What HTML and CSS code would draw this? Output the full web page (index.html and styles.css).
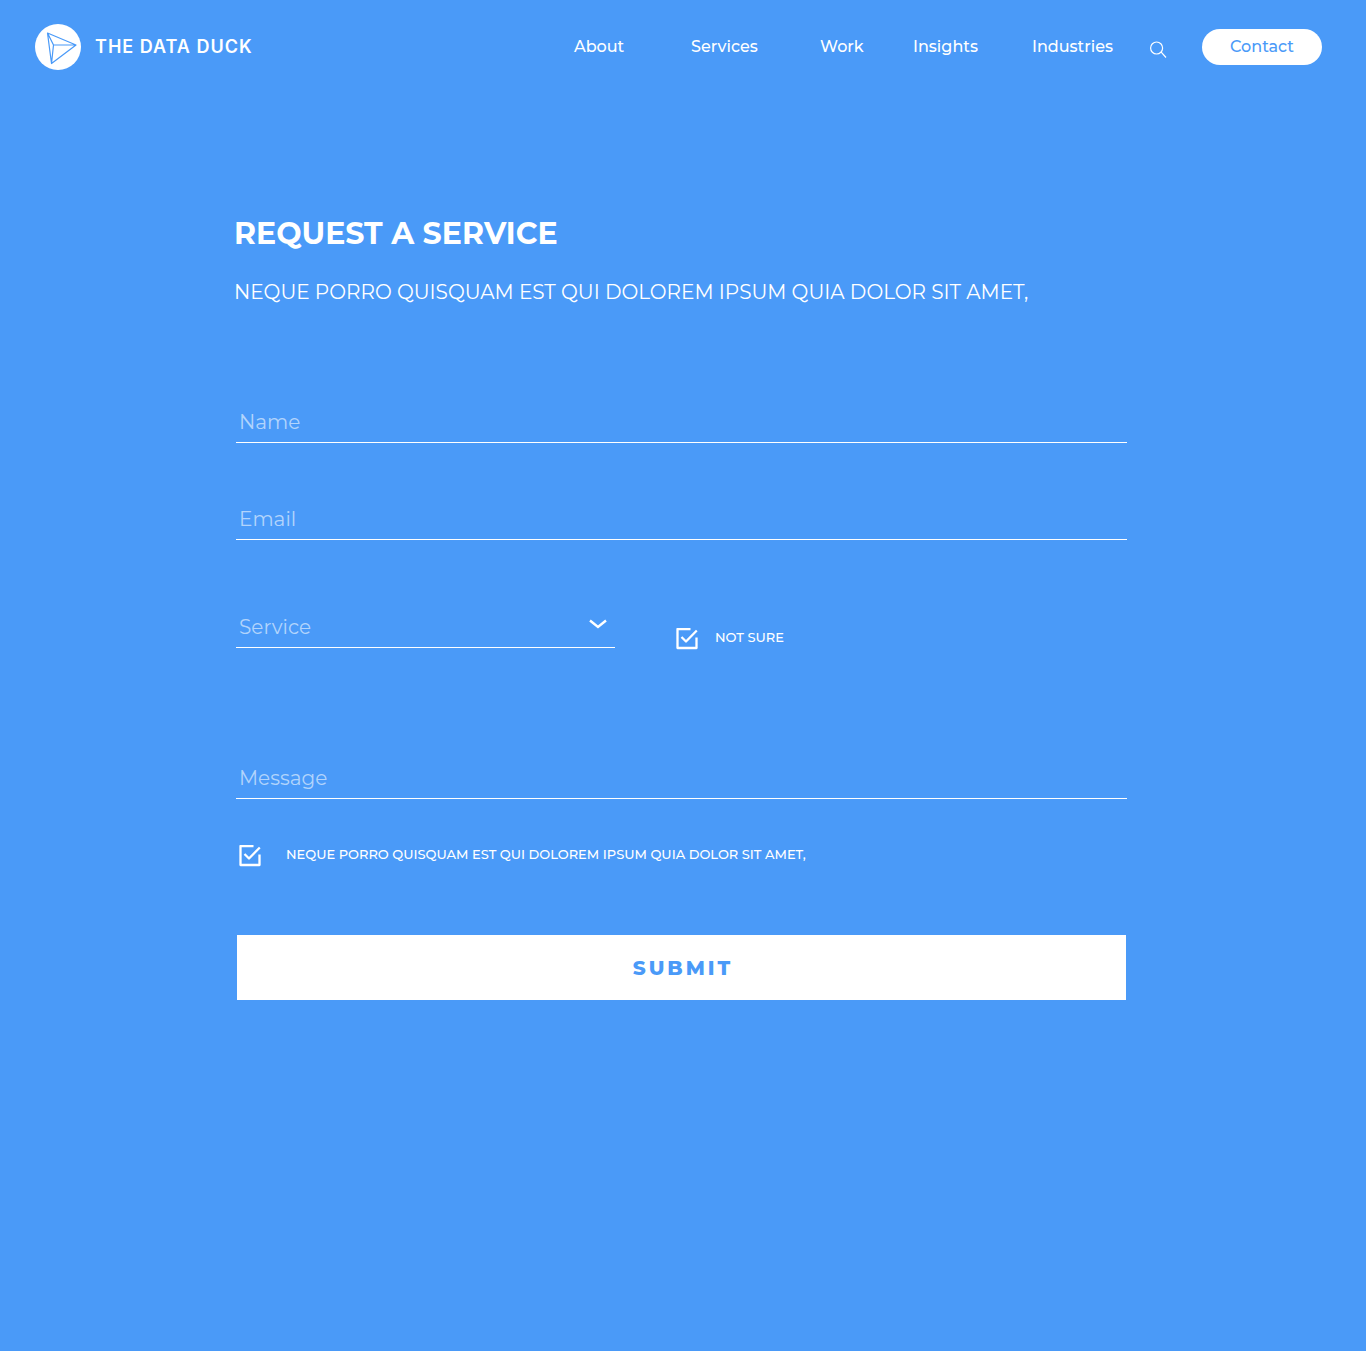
FILE: index.html
```html
<!DOCTYPE html>
<html lang="en">
<head>
<meta charset="utf-8">
<meta name="viewport" content="width=device-width, initial-scale=1">
<title>Request a service – The Data Duck</title>
<link rel="stylesheet" href="styles.css">
</head>
<body>
<header class="header">
  <a class="brand" href="#">
    <svg class="brand-mark" viewBox="0 0 46 46" aria-hidden="true">
      <circle cx="23" cy="23" r="23" fill="#fff"/>
      <path d="M12.500 9 41 21 16.500 39.500ZM12.500 9 18.500 21 41 21M18.500 21 16.500 39.500" fill="none" stroke="#4a9af8" stroke-width="1.200" stroke-linejoin="round"/>
    </svg>
    <span class="brand-name">THE DATA DUCK</span>
  </a>
  <nav class="nav">
    <a class="nav-link" href="#">About</a>
    <a class="nav-link" href="#">Services</a>
    <a class="nav-link" href="#">Work</a>
    <a class="nav-link" href="#">Insights</a>
    <a class="nav-link" href="#">Industries</a>
    <button class="search" type="button" aria-label="Search">
      <svg width="18" height="18" viewBox="0 0 18 18" aria-hidden="true"><path d="M11.200 11.200 16 16.500M12.600 7A6 6 0 1 1 .6 7a6 6 0 0 1 12 0Z" fill="none" stroke="#fff" stroke-width="1.200"/></svg>
    </button>
    <a class="contact" href="#">Contact</a>
  </nav>
</header>
<main class="main">
  <h1 class="title">REQUEST A SERVICE</h1>
  <p class="intro">NEQUE PORRO QUISQUAM EST QUI DOLOREM IPSUM QUIA DOLOR SIT AMET,</p>
  <form class="form">
    <input class="field" type="text" placeholder="Name" aria-label="Name">
    <input class="field email" type="email" placeholder="Email" aria-label="Email">
    <div class="service-row">
      <div class="select-wrap">
        <select class="field select" aria-label="Service"><option>Service</option></select>
        <svg class="chevron" width="18" height="10" viewBox="0 0 18 10" aria-hidden="true"><path d="M1 1.500 9 8 17 1.500" fill="none" stroke="#fff" stroke-width="2.400"/></svg>
      </div>
      <label class="check">
        <span class="tick">
          <input class="tick-input" type="checkbox" checked>
          <svg class="tick-icon" viewBox="0 0 22 22" aria-hidden="true"><path d="M14.500 1.100H1.500V20H20.500V9.500M5.500 9 10 13.500 20.800 2.500" fill="none" stroke="#fff" stroke-width="2.300" stroke-linejoin="round"/></svg>
        </span>
        <span class="check-text">NOT SURE</span>
      </label>
    </div>
    <input class="field message" type="text" placeholder="Message" aria-label="Message">
    <label class="check consent">
      <span class="tick">
        <input class="tick-input" type="checkbox" checked>
        <svg class="tick-icon" viewBox="0 0 22 22" aria-hidden="true"><path d="M14.500 1.100H1.500V20H20.500V9.500M5.500 9 10 13.500 20.800 2.500" fill="none" stroke="#fff" stroke-width="2.300" stroke-linejoin="round"/></svg>
      </span>
      <span class="check-text">NEQUE PORRO QUISQUAM EST QUI DOLOREM IPSUM QUIA DOLOR SIT AMET,</span>
    </label>
    <button class="submit" type="submit">SUBMIT</button>
  </form>
</main>
</body>
</html>
```
FILE: styles.css
```css
* { box-sizing: border-box; }

body {
  margin: 0;
  min-height: 100vh;
  background: #4a9af8;
  color: #fff;
  font-family: Montserrat, Inter, sans-serif;
}

a { color: inherit; text-decoration: none; }
input, select, button { font: inherit; color: inherit; }

.header {
  display: flex;
  justify-content: space-between;
  align-items: center;
  padding: 24px 44px 24px 35px;
}
.brand { display: flex; align-items: center; gap: 14px; }
.brand-mark { width: 46px; height: 46px; }
.brand-name {
  font-family: Inter, sans-serif;
  font-size: 18px;
  line-height: 24px;
  font-weight: 600;
  letter-spacing: 1px;
}

.nav {
  display: grid;
  grid-template-columns: 117px 129px 93px 119px 118px 52px 120px;
  align-items: center;
}
.nav-link { font-size: 16px; line-height: 24px; font-weight: 500; }
.search { display: flex; padding: 5px 0 0; border: 0; background: none; }
.contact {
  border-radius: 18px;
  background: #fff;
  color: #4a9af8;
  font-size: 16px;
  line-height: 36px;
  font-weight: 500;
  text-align: center;
}

.main { max-width: 898px; margin: 0 auto; padding: 120px 5px 48px 0; }
.title { margin: 0; font-size: 30px; line-height: 40px; font-weight: 700; }
.intro { margin: 26px 0 0; font-size: 20px; line-height: 24px; }

.form { display: flex; flex-direction: column; margin-top: 98px; padding-left: 2px; }
.field {
  width: 100%;
  height: 41px;
  padding: 0 3px;
  border: 0;
  border-bottom: 1px solid #fff;
  border-radius: 0;
  outline: 0;
  background: none;
  font-size: 20px;
}
.field::placeholder { color: #b2d4fc; opacity: 1; }
.email { margin-top: 56px; }
.service-row { display: flex; align-items: flex-start; gap: 61px; margin-top: 67px; }
.select-wrap { position: relative; flex: 0 1 379px; }
.select { display: block; appearance: none; color: #b2d4fc; }
.chevron { position: absolute; top: 12px; right: 8px; pointer-events: none; }

.check { display: flex; gap: 17px; }
.service-row .check { margin-top: 21px; }
.tick { display: grid; flex: none; width: 22px; height: 22px; }
.tick-input { grid-area: 1 / 1; width: 22px; height: 22px; margin: 0; appearance: none; }
.tick-icon { grid-area: 1 / 1; pointer-events: none; }
.tick-input:not(:checked) + .tick-icon { opacity: 0.5; }
.check-text { font-size: 13px; line-height: 18px; font-weight: 500; }

.message { margin-top: 108px; }
.consent { gap: 25px; margin: 46px 0 0 3px; }
.submit {
  height: 65px;
  margin: 68px 1px 0;
  padding: 0 0 0 3px;
  border: 0;
  background: #fff;
  color: #4a9af8;
  font-size: 20px;
  font-weight: 800;
  letter-spacing: 3px;
}
```
